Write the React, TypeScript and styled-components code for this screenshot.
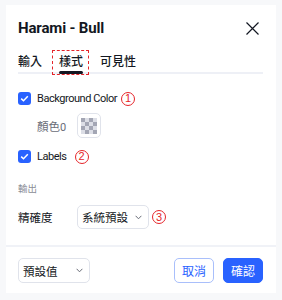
import React from "react";
import styled, { createGlobalStyle } from "styled-components";

const latin = `Roboto, "Noto Sans CJK TC", sans-serif`;
const cjk = `"Noto Sans CJK TC", sans-serif`;

const GlobalStyle = createGlobalStyle`
  html, body {
    margin: 0;
    padding: 0;
    background: #f7f8fa;
  }
  body {
    font-family: ${latin};
    color: #131722;
  }
`;

const Page = styled.div`
  width: 282px;
  height: 300px;
  padding: 5px 6px 7px 6px;
  box-sizing: border-box;
`;

const Dialog = styled.div`
  background: #ffffff;
  height: 100%;
  display: flex;
  flex-direction: column;
  padding: 0 13px 0 12px;
  box-sizing: border-box;
`;

const Header = styled.div`
  display: flex;
  align-items: center;
  justify-content: space-between;
  height: 46px;
`;

const Title = styled.div`
  font-size: 15px;
  font-weight: 700;
  letter-spacing: -0.15px;
`;

const CloseButton = styled.div`
  width: 13px;
  height: 13px;
  margin-right: 4px;
  display: flex;
`;

const Tabs = styled.div`
  display: flex;
  gap: 17px;
  border-bottom: 2px solid #eef0f6;
  height: 23px;
  box-sizing: border-box;
`;

const Tab = styled.div<{ $active?: boolean }>`
  position: relative;
  font-family: ${cjk};
  font-size: 12px;
  font-weight: 500;
  line-height: 17px;
  padding-top: 1px;
  &::before {
    content: "";
    display: ${(p) => (p.$active ? "block" : "none")};
    position: absolute;
    left: -7px;
    right: -6px;
    top: -1px;
    bottom: -3px;
    border: 1px dashed #e5252a;
  }
  &::after {
    content: "";
    display: ${(p) => (p.$active ? "block" : "none")};
    position: absolute;
    left: 0;
    right: 0;
    bottom: -2px;
    height: 3px;
    border-radius: 2px;
    background: #131722;
  }
`;

const Body = styled.div`
  display: flex;
  flex-direction: column;
  flex: 1;
`;

const Row = styled.div<{ $indent?: boolean; $h: number; $top: number }>`
  display: flex;
  align-items: center;
  height: ${(p) => p.$h}px;
  margin-top: ${(p) => p.$top}px;
  padding-left: ${(p) => (p.$indent ? 19 : 0)}px;
`;

const Check = styled.div`
  width: 13px;
  height: 13px;
  border-radius: 3px;
  background: #2962ff;
  display: flex;
  align-items: center;
  justify-content: center;
  margin-right: 6px;
`;

const Label = styled.span<{ $muted?: boolean }>`
  font-family: ${latin};
  font-size: 11px;
  letter-spacing: -0.45px;
  color: ${(p) => (p.$muted ? "#6a6d78" : "#131722")};
`;

const SubLabel = styled.span`
  font-family: ${cjk};
  font-size: 11.5px;
  color: #6a6d78;
  width: 40px;
`;

const Mark = styled.span<{ $gap: number }>`
  display: inline-flex;
  align-items: center;
  justify-content: center;
  width: 14px;
  height: 14px;
  border: 1px solid #e5252a;
  border-radius: 50%;
  color: #e5252a;
  font-size: 11px;
  line-height: 1;
  margin-left: ${(p) => p.$gap}px;
  box-sizing: border-box;
  font-family: "Liberation Sans", sans-serif;
`;

const Swatch = styled.div`
  width: 24px;
  height: 25px;
  border: 1px solid #e0e3eb;
  border-radius: 5px;
  box-sizing: border-box;
  display: flex;
  align-items: center;
  justify-content: center;
`;

const Section = styled.div`
  font-family: ${cjk};
  font-size: 9.5px;
  color: #8a8d96;
  margin-top: 18px;
  height: 14px;
  line-height: 14px;
`;

const FieldLabel = styled.span`
  font-family: ${cjk};
  font-size: 11.5px;
  width: 59px;
`;

const Select = styled.div<{ $h: number }>`
  width: 72px;
  height: ${(p) => p.$h}px;
  border: 1px solid #e0e3eb;
  border-radius: 5px;
  box-sizing: border-box;
  display: flex;
  align-items: center;
  justify-content: space-between;
  padding: 0 6px 0 4px;
  font-family: ${cjk};
  font-size: 11.5px;
  color: #131722;
`;

const Footer = styled.div`
  border-top: 2px solid #f0f2f7;
  margin: 0 -13px 0 -12px;
  padding: 1px 13px 0 12px;
  height: 48px;
  box-sizing: border-box;
  display: flex;
  align-items: center;
  justify-content: space-between;
`;

const Buttons = styled.div`
  display: flex;
  gap: 9px;
`;

const Button = styled.div<{ $primary?: boolean }>`
  width: 40px;
  height: 25px;
  border-radius: 5px;
  box-sizing: border-box;
  display: flex;
  align-items: center;
  justify-content: center;
  font-family: ${cjk};
  font-size: 12px;
  color: ${(p) => (p.$primary ? "#ffffff" : "#2962ff")};
  background: ${(p) => (p.$primary ? "#2962ff" : "#ffffff")};
  border: 1px solid ${(p) => (p.$primary ? "#2962ff" : "#a9bffb")};
`;

const Chevron = () => (
  <svg width="7" height="5" viewBox="0 0 7 5">
    <path d="M0.6 0.8 L3.5 3.8 L6.4 0.8" fill="none" stroke="#6a6d78" strokeWidth="1" />
  </svg>
);

const Tick = () => (
  <svg width="9" height="7" viewBox="0 0 9 7">
    <path d="M1.2 3.6 L3.5 5.8 L7.8 1.2" fill="none" stroke="#fff" strokeWidth="1.5" />
  </svg>
);

const Checker = () => (
  <svg width="16" height="16" viewBox="0 0 16 16">
    {[0, 1, 2, 3].flatMap((r) =>
      [0, 1, 2, 3].map((c) => (
        <rect
          key={`${r}-${c}`}
          x={c * 4}
          y={r * 4}
          width="4"
          height="4"
          fill={(r + c) % 2 === 0 ? "#a3a6b4" : "#dcdee6"}
        />
      ))
    )}
  </svg>
);

export default function App() {
  return (
    <>
      <GlobalStyle />
      <Page>
        <Dialog>
          <Header>
            <Title>Harami - Bull</Title>
            <CloseButton>
              <svg width="13" height="13" viewBox="0 0 13 13">
                <path d="M0.5 0.5 L12.5 12.5 M12.5 0.5 L0.5 12.5" stroke="#131722" strokeWidth="1.2" />
              </svg>
            </CloseButton>
          </Header>
          <Tabs>
            <Tab>輸入</Tab>
            <Tab $active>樣式</Tab>
            <Tab>可見性</Tab>
          </Tabs>
          <Body>
            <Row $h={13} $top={18}>
              <Check>
                <Tick />
              </Check>
              <Label>Background Color</Label>
              <Mark $gap={4}>1</Mark>
            </Row>
            <Row $indent $h={25} $top={8}>
              <SubLabel>
                顏色<Label $muted>0</Label>
              </SubLabel>
              <Swatch>
                <Checker />
              </Swatch>
            </Row>
            <Row $h={13} $top={12}>
              <Check>
                <Tick />
              </Check>
              <Label>Labels</Label>
              <Mark $gap={8}>2</Mark>
            </Row>
            <Section>輸出</Section>
            <Row $h={24} $top={10}>
              <FieldLabel>精確度</FieldLabel>
              <Select $h={24}>
                系統預設
                <Chevron />
              </Select>
              <Mark $gap={3}>3</Mark>
            </Row>
          </Body>
          <Footer>
            <Select $h={25}>
              預設值
              <Chevron />
            </Select>
            <Buttons>
              <Button>取消</Button>
              <Button $primary>確認</Button>
            </Buttons>
          </Footer>
        </Dialog>
      </Page>
    </>
  );
}
